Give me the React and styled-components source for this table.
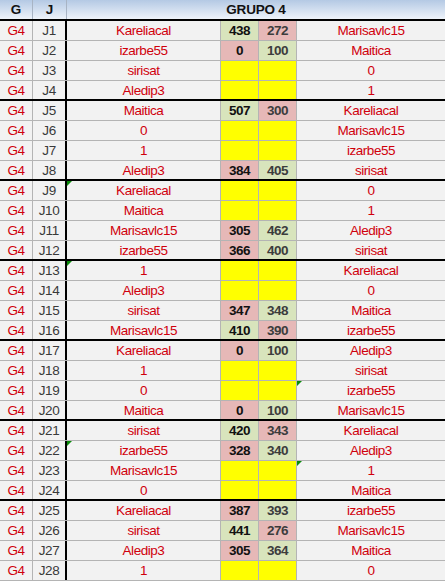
import React from "react";
import styled, { createGlobalStyle } from "styled-components";

const GlobalStyle = createGlobalStyle`
  html, body { margin: 0; padding: 0; background: #ffffff; }
  body { font-family: "Liberation Sans", Arial, sans-serif; }
`;

const COLS = "33px 34px 154px 38px 38px 148px";

const Sheet = styled.div`
  width: 445px;
  background: #f2f2f2;
  font-size: 13.5px;
  letter-spacing: -0.45px;
`;

const HeaderRow = styled.div`
  display: grid;
  grid-template-columns: 33px 34px 378px;
  height: 21px;
  box-sizing: border-box;
  border-bottom: 2px solid #000;
  background: linear-gradient(#b4c9e4, #eef3fa);
`;

const HeadCell = styled.div`
  display: flex;
  align-items: center;
  justify-content: center;
  font-weight: bold;
  color: #111;
  letter-spacing: -0.2px;
  box-sizing: border-box;
  border-right: ${(p) => (p.$last ? "none" : "1px solid #a8b4c4")};
`;

const Row = styled.div`
  display: grid;
  grid-template-columns: ${COLS};
  height: 20px;
  box-sizing: border-box;
  border-bottom: ${(p) => (p.$groupEnd ? "2px solid #000" : "1px solid #b4b4b4")};
`;

const fills = { g: "#d8e4bc", p: "#e6b8b7", y: "#ffff00" };

const Cell = styled.div`
  position: relative;
  display: flex;
  align-items: center;
  justify-content: center;
  box-sizing: border-box;
  border-right: ${(p) => (p.$thick ? "2px solid #000" : p.$last ? "none" : "1px solid #b4b4b4")};
  color: ${(p) => p.$color || "#d0000c"};
  background: ${(p) => (p.$fill ? fills[p.$fill] : "transparent")};
  font-weight: ${(p) => (p.$bold ? "bold" : "normal")};
  white-space: nowrap;
  overflow: hidden;
`;

const Marker = styled.span`
  position: absolute;
  top: 0;
  left: 0;
  width: 0;
  height: 0;
  border-top: 5px solid #0a8a0a;
  border-right: 5px solid transparent;
`;

// [name1, s1, s2, name2, fill1, fill2, triangle]
const data = [
  ["Kareliacal", "438", "272", "Marisavlc15", "g", "p"],
  ["izarbe55", "0", "100", "Maitica", "p", "g"],
  ["sirisat", "", "", "0", "y", "y"],
  ["Aledip3", "", "", "1", "y", "y"],
  ["Maitica", "507", "300", "Kareliacal", "g", "p"],
  ["0", "", "", "Marisavlc15", "y", "y"],
  ["1", "", "", "izarbe55", "y", "y"],
  ["Aledip3", "384", "405", "sirisat", "p", "g"],
  ["Kareliacal", "", "", "0", "y", "y", "a"],
  ["Maitica", "", "", "1", "y", "y"],
  ["Marisavlc15", "305", "462", "Aledip3", "p", "g"],
  ["izarbe55", "366", "400", "sirisat", "p", "g"],
  ["1", "", "", "Kareliacal", "y", "y", "a"],
  ["Aledip3", "", "", "0", "y", "y"],
  ["sirisat", "347", "348", "Maitica", "p", "g"],
  ["Marisavlc15", "410", "390", "izarbe55", "g", "p"],
  ["Kareliacal", "0", "100", "Aledip3", "p", "g"],
  ["1", "", "", "sirisat", "y", "y"],
  ["0", "", "", "izarbe55", "y", "y", "b"],
  ["Maitica", "0", "100", "Marisavlc15", "p", "g"],
  ["sirisat", "420", "343", "Kareliacal", "g", "p"],
  ["izarbe55", "328", "340", "Aledip3", "p", "g", "a"],
  ["Marisavlc15", "", "", "1", "y", "y", "b"],
  ["0", "", "", "Maitica", "y", "y"],
  ["Kareliacal", "387", "393", "izarbe55", "p", "g"],
  ["sirisat", "441", "276", "Marisavlc15", "g", "p"],
  ["Aledip3", "305", "364", "Maitica", "p", "g"],
  ["1", "", "", "0", "y", "y"],
];

export default function App() {
  return (
    <Sheet>
      <GlobalStyle />
      <HeaderRow>
        <HeadCell>G</HeadCell>
        <HeadCell>J</HeadCell>
        <HeadCell $last>GRUPO 4</HeadCell>
      </HeaderRow>
      {data.map(([n1, s1, s2, n2, f1, f2, mark], i) => (
        <Row key={i} $groupEnd={i % 4 === 3 && i !== data.length - 1}>
          <Cell>G4</Cell>
          <Cell $thick $color="#3a3a3a">J{i + 1}</Cell>
          <Cell>
            {mark === "a" && <Marker />}
            {n1}
          </Cell>
          <Cell $fill={f1} $bold $color="#111">{s1}</Cell>
          <Cell $fill={f2} $bold $color="#3c3c3c">{s2}</Cell>
          <Cell $last>
            {mark === "b" && <Marker />}
            {n2}
          </Cell>
        </Row>
      ))}
    </Sheet>
  );
}
